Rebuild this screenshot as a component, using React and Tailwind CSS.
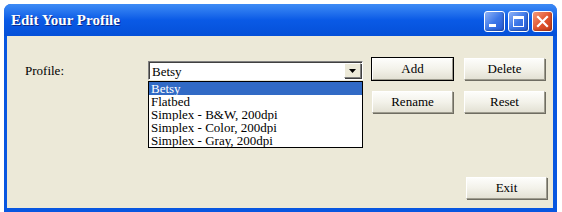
import React from "react";

function Btn({ children, def }) {
  return (
    <div
      className={
        "w-[81px] h-[22px] flex items-center justify-center text-[13px] text-black bg-gradient-to-b from-[#fdfdfb] via-[#f3f2ea] to-[#e3e1d4] border border-t-white border-l-white border-b-[#9d9b8e] border-r-[#9d9b8e] shadow-[1px_1px_0_#6f6d62] " +
        (def ? "outline outline-1 outline-black" : "")
      }
    >
      <span className="leading-none pb-[1px]">{children}</span>
    </div>
  );
}

function TitleBtn({ kind }) {
  const red = kind === "close";
  return (
    <div
      className={
        "w-[21px] h-[21px] rounded-[3px] border border-white flex items-center justify-center shadow-[inset_-1px_-1px_2px_rgba(0,0,0,0.25)] " +
        (red
          ? "bg-gradient-to-br from-[#f29a7c] via-[#e2552f] to-[#c43b18]"
          : "bg-gradient-to-br from-[#8fb2f6] via-[#3d77e8] to-[#2357d4]")
      }
    >
      {kind === "min" && <div className="w-[7px] h-[3px] bg-white mt-[8px] mr-[4px]" />}
      {kind === "max" && (
        <div className="w-[11px] h-[11px] border border-white border-t-[3px]" />
      )}
      {kind === "close" && (
        <svg width="13" height="13" viewBox="0 0 13 13">
          <path d="M2 2 L11 11 M11 2 L2 11" stroke="white" strokeWidth="2.2" strokeLinecap="square" />
        </svg>
      )}
    </div>
  );
}

export default function App() {
  const items = [
    "Betsy",
    "Flatbed",
    "Simplex - B&W, 200dpi",
    "Simplex - Color, 200dpi",
    "Simplex - Gray, 200dpi",
  ];
  return (
    <div className="w-[562px] h-[212px] bg-white pl-[4px] pt-[4px] overflow-hidden font-['Liberation_Serif','DejaVu_Serif',serif]">
      <div className="w-[553px] h-[208px] flex flex-col rounded-t-[7px] bg-[#0856e0] overflow-hidden">
        <div className="h-[32px] flex items-center justify-between pl-[7px] pr-[4px] bg-gradient-to-b from-[#3d8bf5] via-[#0a5ae6] to-[#0550d8]">
          <span className="text-white font-bold text-[15px] leading-none mt-[1px] [text-shadow:1px_1px_0_#0a2a8a]">
            Edit Your Profile
          </span>
          <div className="flex gap-[3px] mt-[2px]">
            <TitleBtn kind="min" />
            <TitleBtn kind="max" />
            <TitleBtn kind="close" />
          </div>
        </div>
        <div className="flex-1 ml-[3px] mr-[4px] mb-[4px] bg-[#ece9d8] flex flex-col relative">
          <div className="flex pt-[22px] pl-[18px]">
            <div className="w-[123px] text-[13px] text-black pt-[6px] leading-none">Profile:</div>
            <div className="relative w-[215px] mt-[3px]">
              <div className="h-[19px] bg-white border border-t-[#808080] border-l-[#808080] border-b-white border-r-white shadow-[inset_1px_1px_0_#404040] flex items-center">
                <span className="flex-1 text-[13px] leading-none pl-[3px] pt-[1px]">Betsy</span>
                <div className="w-[17px] h-[15px] mr-[1px] bg-[#ece9d8] border border-t-white border-l-white border-b-[#808080] border-r-[#808080] shadow-[1px_1px_0_#404040] flex items-center justify-center">
                  <svg width="7" height="4" viewBox="0 0 7 4">
                    <path d="M0 0 H7 L3.5 4 Z" fill="black" />
                  </svg>
                </div>
              </div>
              <div className="absolute left-0 top-[20px] w-[215px] bg-white border border-black z-10">
                {items.map((t, i) => (
                  <div
                    key={t}
                    className={
                      "h-[13px] text-[13px] leading-[13px] pl-[2px] whitespace-nowrap overflow-hidden " +
                      (i === 0 ? "bg-[#316ac5] text-white" : "text-black")
                    }
                  >
                    {t}
                  </div>
                ))}
              </div>
            </div>
            <div className="ml-[9px] grid grid-cols-2 gap-x-[11px] gap-y-[11px]">
              <Btn def>Add</Btn>
              <Btn>Delete</Btn>
              <Btn>Rename</Btn>
              <Btn>Reset</Btn>
            </div>
          </div>
          <div className="mt-auto flex justify-end pr-[6px] pb-[9px]">
            <Btn>Exit</Btn>
          </div>
        </div>
      </div>
    </div>
  );
}
